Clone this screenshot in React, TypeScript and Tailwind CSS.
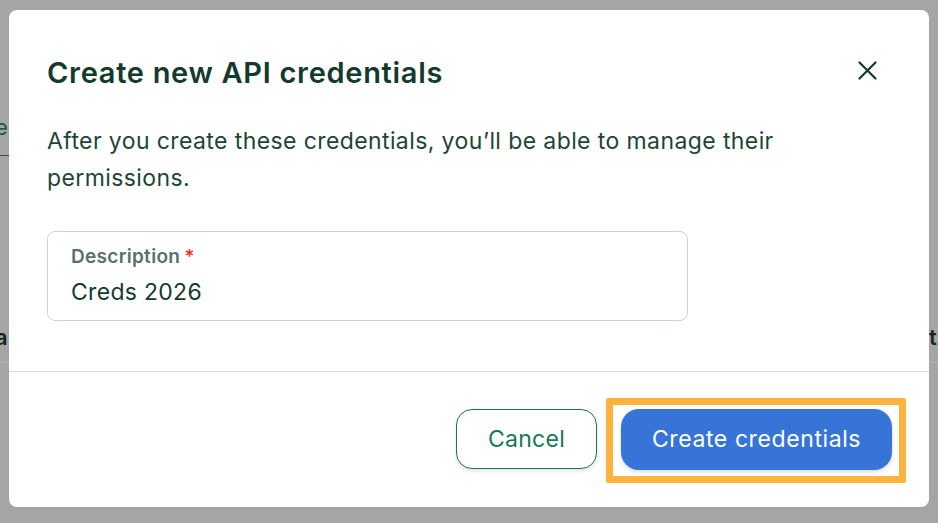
import React from "react";

export default function App() {
  return (
    <div
      className="relative w-[938px] h-[523px] overflow-hidden bg-[#a5a5a5] pl-[9px] pt-[10px]"
      style={{ fontFamily: "Inter, 'Noto Sans', sans-serif" }}
    >
      {/* dimmed page behind the overlay */}
      <span className="absolute left-[-5px] top-[112px] text-[22px] leading-[30px] text-[#1f5a44]">e</span>
      <div className="absolute left-0 top-[155px] h-[1px] w-[9px] bg-[#1f5a44]" />
      <span className="absolute left-[-5px] top-[322px] text-[22px] font-semibold leading-[30px] text-[#16271f]">a</span>
      <span className="absolute left-[929px] top-[322px] text-[22px] font-semibold leading-[30px] text-[#16271f]">t</span>
      <div className="absolute left-0 top-[362px] h-[1px] w-[9px] bg-[#b4b4b4]" />
      <div className="absolute left-[929px] top-[362px] h-[1px] w-[9px] bg-[#b4b4b4]" />

      <div className="relative flex h-[497px] w-[920px] flex-col rounded-[8px] bg-white">
        <div className="flex flex-col px-[38px] pt-[45px]">
          <div className="flex items-start justify-between">
            <h2 className="text-[29px] font-semibold leading-[35px] tracking-[0.7px] text-[#143a2c]">
              Create new API credentials
            </h2>
            <button className="mr-[14px] mt-[6px] flex h-[19px] w-[19px] items-center justify-center text-[#143a2c]">
              <svg width="19" height="19" viewBox="0 0 19 19" fill="none">
                <path d="M1.5 1.5 L17.5 17.5 M17.5 1.5 L1.5 17.5" stroke="currentColor" strokeWidth="2.2" strokeLinecap="round" />
              </svg>
            </button>
          </div>
          <p className="mt-[33px] w-[780px] text-[23px] leading-[37px] tracking-[0.4px] text-[#1d4536]">
            After you create these credentials, you’ll be able to manage their permissions.
          </p>
          <div className="mt-[34px] flex h-[90px] w-[641px] flex-col rounded-[8px] border-[1.5px] border-[#cdd5d2] pl-[23px] pt-[14px]">
            <div className="flex text-[19px] font-semibold leading-[22px] tracking-[0.3px] text-[#587266]">
              Description<span className="ml-[4px] text-[#e0382f]">*</span>
            </div>
            <div className="mt-[10px] text-[23px] leading-[28px] tracking-[0.3px] text-[#163b2d]">Creds 2026</div>
          </div>
        </div>
        <div className="mt-[50px] h-[1px] w-full bg-[#d6dedb]" />
        <div className="flex flex-1 items-start justify-end gap-[24px] pr-[37px] pt-[37px]">
          <button className="h-[60px] w-[141px] rounded-[16px] border-[1.5px] border-[#137a54] bg-white text-[23px] tracking-[0.3px] text-[#137a54] shadow-[0_2px_4px_rgba(0,0,0,0.12)]">
            Cancel
          </button>
          <div className="relative">
            <div className="pointer-events-none absolute bottom-[-13px] left-[-15px] right-[-14px] top-[-11px] rounded-[2px] border-[7px] border-[#ffb23c]" />
            <button className="h-[61px] w-[271px] rounded-[18px] bg-[#3774d8] text-[23px] tracking-[0.6px] text-white shadow-[0_2px_4px_rgba(0,0,0,0.15)]">
              Create credentials
            </button>
          </div>
        </div>
      </div>
    </div>
  );
}
